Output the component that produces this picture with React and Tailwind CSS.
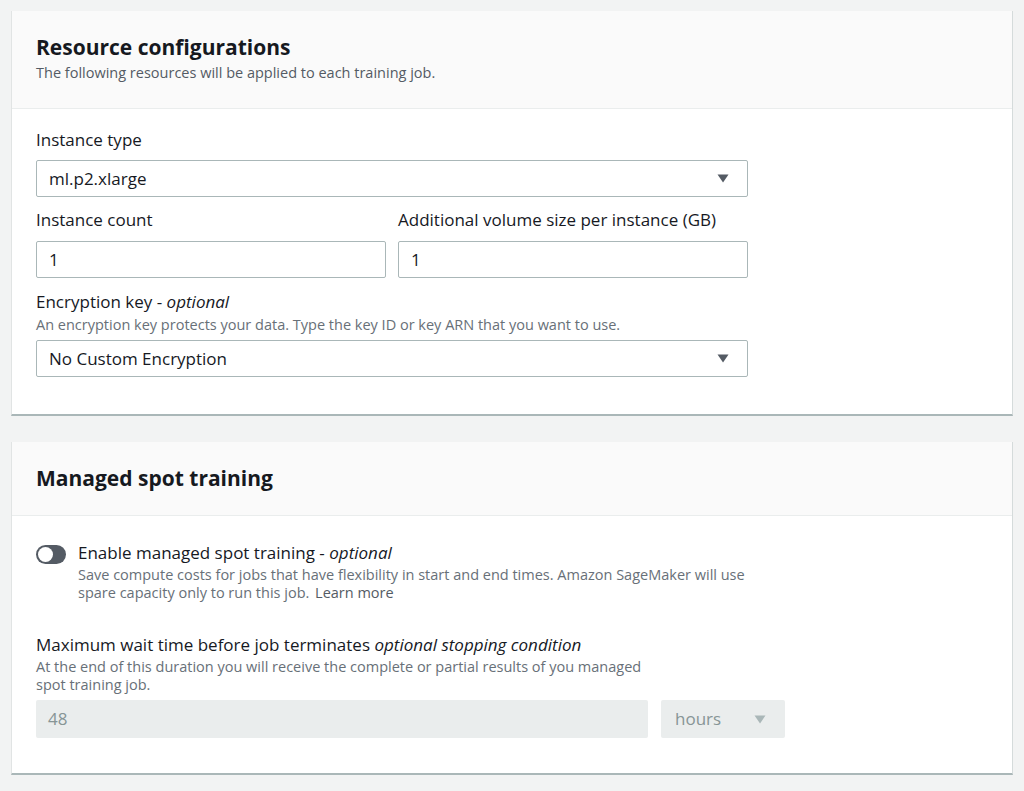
const Arrow = ({ muted }) => (
  <svg width="12" height="9" viewBox="0 0 12 9" className="shrink-0">
    <path d="M0.5 0.5 L11.5 0.5 L6 8.5 Z" fill={muted ? '#aab7b8' : '#545b64'} />
  </svg>
)

const Select = ({ value }) => (
  <div className="flex h-[37px] w-[712px] items-center justify-between rounded-[2px] border border-[#aab7b8] bg-white pl-[12px] pr-[18px] text-[17px] text-[#16191f]">
    <span>{value}</span>
    <Arrow />
  </div>
)

const Input = ({ value }) => (
  <div className="flex h-[37px] w-[350px] items-center rounded-[2px] border border-[#aab7b8] bg-white pl-[12px] text-[17px] text-[#16191f]">
    {value}
  </div>
)

const Card = ({ title, subtitle, children }) => (
  <div className="mx-[11px] border-l border-r border-l-[#e1e4e4] border-r-[#d5dbdb] border-b-2 border-b-[#aab7b8] bg-white">
    <div className="border-b border-[#eaeded] bg-[#fafafa] px-[24px] pt-[23px] pb-[24px]">
      <h2 className="text-[21px] font-bold leading-[26px] text-[#16191f]">{title}</h2>
      {subtitle && <p className="mt-[3px] pb-[1px] text-[14.5px] leading-[20px] text-[#545b64]">{subtitle}</p>}
    </div>
    {children}
  </div>
)

export default function App() {
  return (
    <div className="min-h-[791px] bg-[#f2f3f3] pt-[11px]" style={{ fontFamily: '"Open Sans", "Noto Sans", sans-serif' }}>
      <Card title="Resource configurations" subtitle="The following resources will be applied to each training job.">
        <div className="px-[24px] pt-[19px] pb-[37px]">
          <div className="text-[17px] leading-[24px] text-[#16191f]">Instance type</div>
          <div className="mt-[8px]">
            <Select value="ml.p2.xlarge" />
          </div>
          <div className="mt-[11px] flex gap-[12px]">
            <div>
              <div className="text-[17px] leading-[24px] text-[#16191f]">Instance count</div>
              <div className="mt-[9px]">
                <Input value="1" />
              </div>
            </div>
            <div>
              <div className="text-[17px] leading-[24px] text-[#16191f]">Additional volume size per instance (GB)</div>
              <div className="mt-[9px]">
                <Input value="1" />
              </div>
            </div>
          </div>
          <div className="mt-[12px] text-[17px] leading-[24px] text-[#16191f]">
            Encryption key - <i>optional</i>
          </div>
          <div className="mt-[1px] text-[14.5px] leading-[20px] text-[#687078]">
            An encryption key protects your data. Type the key ID or key ARN that you want to use.
          </div>
          <div className="mt-[5px]">
            <Select value="No Custom Encryption" />
          </div>
        </div>
      </Card>

      <div className="h-[26px]" />

      <Card title="Managed spot training">
        <div className="px-[24px] pt-[25px] pb-[35px]">
          <div className="flex gap-[12px]">
            <div className="mt-[4px] flex h-[19px] w-[30px] shrink-0 items-center rounded-full bg-[#545b64] pl-[2px]">
              <div className="h-[15px] w-[15px] rounded-full bg-white" />
            </div>
            <div>
              <div className="text-[17px] leading-[24px] text-[#16191f]">
                Enable managed spot training - <i>optional</i>
              </div>
              <div className="mt-[1px] text-[14.5px] leading-[18px] text-[#687078]">
                Save compute costs for jobs that have flexibility in start and end times. Amazon SageMaker will use
                <br />
                spare capacity only to run this job. <span className="ml-[2px] text-[#545b64]">Learn more</span>
              </div>
            </div>
          </div>
          <div className="mt-[31px] text-[17px] leading-[24px] text-[#16191f]">
            Maximum wait time before job terminates <i>optional stopping condition</i>
          </div>
          <div className="mt-[1px] text-[14.5px] leading-[18px] text-[#687078]">
            At the end of this duration you will receive the complete or partial results of you managed
            <br />
            spot training job.
          </div>
          <div className="mt-[6px] flex gap-[13px]">
            <div className="flex h-[38px] w-[612px] items-center rounded-[2px] bg-[#eaeded] pl-[12px] text-[17px] text-[#879596]">
              48
            </div>
            <div className="flex h-[38px] w-[124px] items-center justify-between rounded-[2px] bg-[#eaeded] pl-[14px] pr-[19px] text-[17px] text-[#879596]">
              <span>hours</span>
              <Arrow muted />
            </div>
          </div>
        </div>
      </Card>
    </div>
  )
}
